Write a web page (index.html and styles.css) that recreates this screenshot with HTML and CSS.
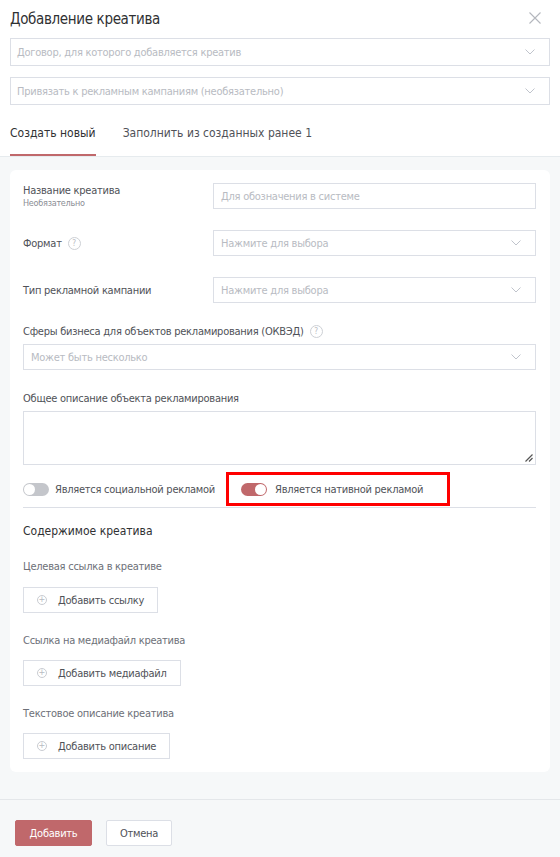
FILE: index.html
```html
<!DOCTYPE html>
<html lang="ru">
<head>
    <meta charset="UTF-8">
    <meta name="viewport" content="width=device-width, initial-scale=1.0">
    <title>Добавление креатива</title>
    <link rel="stylesheet" href="styles.css">
</head>
<body>
    <div class="modal">
        <div class="head">
            <div class="title-row">
                <span class="title">Добавление креатива</span>
                <svg class="close" width="12" height="12" viewBox="0 0 12 12"><path d="M0.5 0.5L11.5 11.5M11.5 0.5L0.5 11.5" stroke="#b4b7bd" stroke-width="1.1" fill="none"/></svg>
            </div>
            <div class="select wide">
                <span>Договор, для которого добавляется креатив</span>
                <svg class="chev" width="10" height="6" viewBox="0 0 10 6"><path d="M0.5 0.5L5 5L9.5 0.5" stroke="#c0c4cc" fill="none"/></svg>
            </div>
            <div class="select wide second">
                <span>Привязать к рекламным кампаниям (необязательно)</span>
                <svg class="chev" width="10" height="6" viewBox="0 0 10 6"><path d="M0.5 0.5L5 5L9.5 0.5" stroke="#c0c4cc" fill="none"/></svg>
            </div>
            <div class="tabs">
                <div class="tab active">Создать новый</div>
                <div class="tab">Заполнить из созданных ранее 1</div>
            </div>
        </div>

        <div class="content">
            <div class="card">
                <div class="row">
                    <div class="row-label">
                        <div>Название креатива</div>
                        <div class="hint">Необязательно</div>
                    </div>
                    <div class="select field"><span>Для обозначения в системе</span></div>
                </div>
                <div class="row">
                    <div class="row-label">Формат <span class="help">?</span></div>
                    <div class="select field">
                        <span>Нажмите для выбора</span>
                        <svg class="chev" width="10" height="6" viewBox="0 0 10 6"><path d="M0.5 0.5L5 5L9.5 0.5" stroke="#c0c4cc" fill="none"/></svg>
                    </div>
                </div>
                <div class="row">
                    <div class="row-label">Тип рекламной кампании</div>
                    <div class="select field">
                        <span>Нажмите для выбора</span>
                        <svg class="chev" width="10" height="6" viewBox="0 0 10 6"><path d="M0.5 0.5L5 5L9.5 0.5" stroke="#c0c4cc" fill="none"/></svg>
                    </div>
                </div>

                <div class="label top">Сферы бизнеса для объектов рекламирования (ОКВЭД) <span class="help">?</span></div>
                <div class="select field">
                    <span>Может быть несколько</span>
                    <svg class="chev" width="10" height="6" viewBox="0 0 10 6"><path d="M0.5 0.5L5 5L9.5 0.5" stroke="#c0c4cc" fill="none"/></svg>
                </div>

                <div class="label top">Общее описание объекта рекламирования</div>
                <div class="textarea">
                    <svg class="grip" width="8" height="8" viewBox="0 0 8 8"><path d="M7.5 0.5L0.5 7.5M7.5 4L4 7.5" stroke="#555" stroke-width="1.2" fill="none"/></svg>
                </div>

                <div class="switches">
                    <div class="switch-item">
                        <span class="switch"><span class="knob"></span></span>
                        Является социальной рекламой
                    </div>
                    <div class="switch-item marked">
                        <span class="switch on"><span class="knob"></span></span>
                        Является нативной рекламой
                    </div>
                </div>

                <div class="section-title">Содержимое креатива</div>

                <div class="label sub">Целевая ссылка в креативе</div>
                <div class="add-btn"><span class="plus">+</span>Добавить ссылку</div>

                <div class="label sub">Ссылка на медиафайл креатива</div>
                <div class="add-btn"><span class="plus">+</span>Добавить медиафайл</div>

                <div class="label sub">Текстовое описание креатива</div>
                <div class="add-btn"><span class="plus">+</span>Добавить описание</div>
            </div>
        </div>

        <div class="footer">
            <button class="btn primary">Добавить</button>
            <button class="btn">Отмена</button>
        </div>
    </div>
</body>
</html>
```

FILE: styles.css
```css
body {
    margin: 0;
    font-family: "DejaVu Sans Condensed", "DejaVu Sans", sans-serif;
    color: #606266;
    background: #f6f8f9;
    letter-spacing: -0.25px;
}

.modal {
    width: 560px;
    min-height: 857px;
    background: #f6f8f9;
}

.head {
    background: #fff;
    padding: 0 10px 0 10px;
    border-bottom: 1px solid #e6ebee;
}

.title-row {
    height: 38px;
    display: flex;
    align-items: center;
    justify-content: space-between;
}
.title {
    font-size: 15px;
    color: #303133;
    letter-spacing: -0.35px;
}
.close {
    margin-right: 9px;
    margin-top: -2px;
}

.select {
    box-sizing: border-box;
    height: 28px;
    border: 1px solid #dcdfe6;
    background: #fff;
    display: flex;
    align-items: center;
    justify-content: space-between;
    padding: 0 14px 0 6px;
    font-size: 11px;
    color: #b8bbc2;
}
.select.second {
    margin-top: 11px;
}
.chev {
    flex: none;
}

.tabs {
    display: flex;
    margin-top: 7px;
}
.tab {
    height: 42px;
    display: flex;
    align-items: center;
    font-size: 12px;
    letter-spacing: 0;
    color: #505258;
    border-bottom: 2px solid transparent;
    margin-right: 27px;
}
.tab.active {
    color: #303133;
    border-bottom-color: #c0686b;
}

.content {
    padding: 13px 10px 27px 10px;
}

.card {
    background: #fff;
    border-radius: 6px;
    padding: 13px 14px 13px 13px;
}

.row {
    display: flex;
    align-items: center;
    margin-bottom: 21px;
}
.row:nth-child(3) {
    margin-bottom: 20px;
}
.row-label {
    width: 190px;
    flex: none;
    font-size: 11px;
    color: #505258;
    display: flex;
    flex-direction: column;
}
.row:nth-child(2) .row-label {
    flex-direction: row;
    align-items: center;
}
.hint {
    font-size: 9px;
    color: #8b8e95;
    margin-top: 1px;
}
.field {
    flex: 1;
    height: 26px;
    padding-left: 7px;
}

.help {
    display: inline-flex;
    align-items: center;
    justify-content: center;
    box-sizing: border-box;
    width: 13px;
    height: 13px;
    border: 1px solid #cdd0d5;
    border-radius: 50%;
    font-size: 8px;
    letter-spacing: 0;
    color: #b8bbc2;
    margin-left: 6px;
}

.label {
    font-size: 11px;
    color: #505258;
    display: flex;
    align-items: center;
}
.label.top {
    height: 16px;
    margin-bottom: 5px;
}

.field + .label.top {
    margin-top: 20px;
}

.textarea {
    box-sizing: border-box;
    height: 54px;
    border: 1px solid #dcdfe6;
    display: flex;
    justify-content: flex-end;
    align-items: flex-end;
    padding: 0 2px 2px 0;
}

.switches {
    display: flex;
    align-items: center;
    margin-top: 7px;
    border-bottom: 1px solid #dcdfe6;
    padding-bottom: 1px;
}
.switch-item {
    display: flex;
    align-items: center;
    font-size: 11px;
    color: #505258;
    height: 34px;
}
.switch-item.marked {
    box-sizing: border-box;
    border: 3px solid #ff0000;
    margin-left: 11px;
    padding: 0 24px 0 12px;
}
.switch {
    width: 26px;
    height: 13px;
    border-radius: 7px;
    background: #c4c6cb;
    margin-right: 6px;
    display: flex;
    align-items: center;
    padding: 0 1px;
    box-sizing: border-box;
}
.switch.on {
    background: #c0686b;
    justify-content: flex-end;
    margin-right: 8px;
}
.knob {
    width: 11px;
    height: 11px;
    border-radius: 50%;
    background: #fff;
}

.section-title {
    font-size: 12px;
    letter-spacing: 0;
    color: #303133;
    margin-top: 14px;
    height: 18px;
    line-height: 18px;
}

.label.sub {
    color: #6d7078;
    height: 16px;
    margin-top: 18px;
    margin-bottom: 13px;
}
.add-btn + .label.sub {
    margin-top: 19px;
    margin-bottom: 12px;
}

.add-btn {
    box-sizing: border-box;
    display: inline-flex;
    align-items: center;
    height: 26px;
    border: 1px solid #dcdfe6;
    padding: 0 13px 0 13px;
    font-size: 11px;
    color: #505258;
}
.plus {
    box-sizing: border-box;
    width: 10px;
    height: 10px;
    border: 1px solid #c9ccd2;
    border-radius: 50%;
    font-size: 9px;
    line-height: 7px;
    letter-spacing: 0;
    text-align: center;
    color: #b8bbc2;
    margin-right: 11px;
}

.footer {
    border-top: 1px solid #e4e7ea;
    padding: 20px 15px;
    display: flex;
    gap: 14px;
}
.btn {
    height: 26px;
    font-family: inherit;
    font-size: 11px;
    letter-spacing: -0.25px;
    border: 1px solid #dcdfe6;
    background: #fff;
    color: #505258;
    padding: 0 13px;
    border-radius: 2px;
}
.btn.primary {
    background: #c0686b;
    border-color: #c0686b;
    color: #fff;
    width: 77px;
}
```
